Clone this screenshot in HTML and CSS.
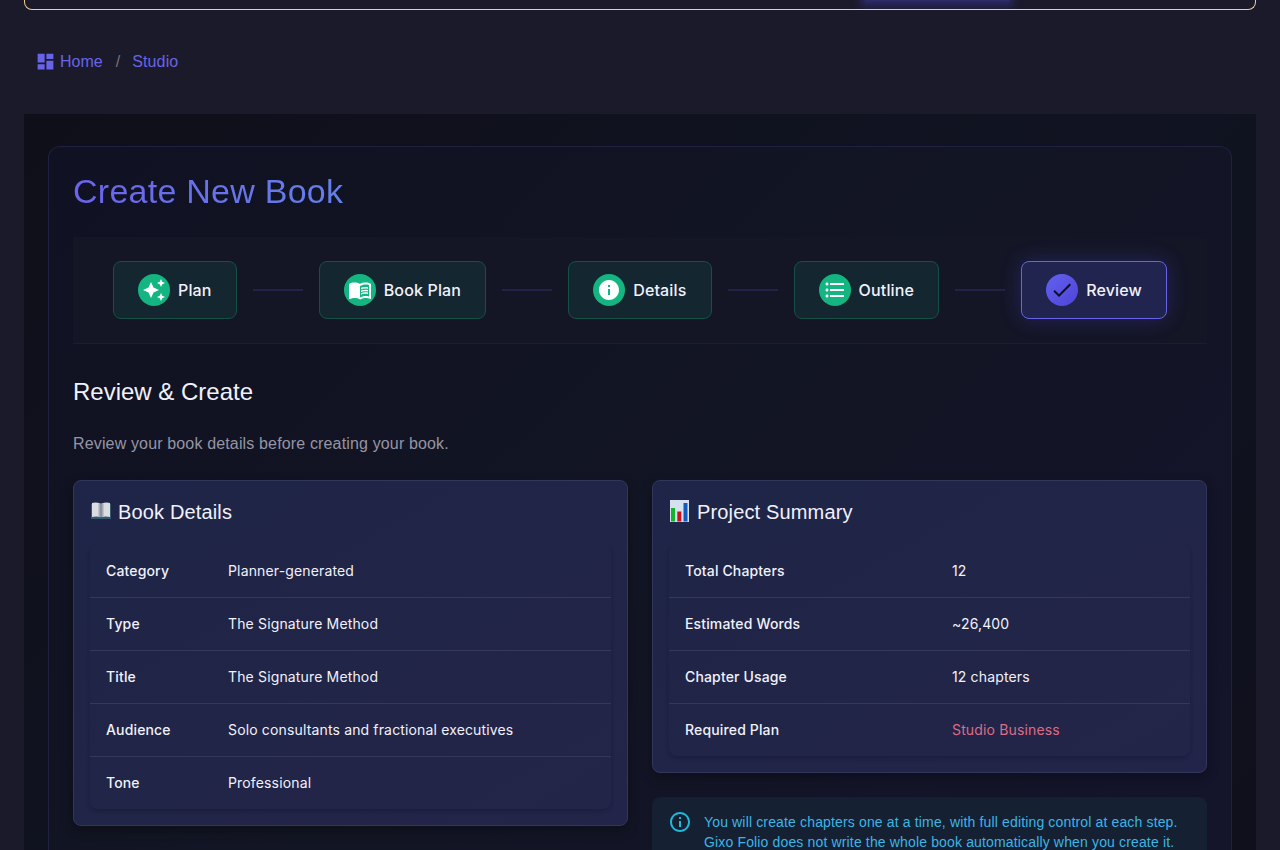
FILE: index.html
```
<!DOCTYPE html>
<html lang="en">

<head>
    <meta charset="UTF-8">
    <title>Create New Book</title>
    <link rel="stylesheet" href="styles.css">
</head>

<body>
    <div class="banner">
        <div class="banner-glow"></div>
    </div>

    <nav class="breadcrumb">
        <a class="home" href="#">
            <svg viewBox="0 0 24 24"><path d="M3 13h8V3H3v10zm0 8h8v-6H3v6zm10 0h8V11h-8v10zm0-18v6h8V3h-8z"/></svg>
            <span>Home</span>
        </a>
        <span class="separator">/</span>
        <a href="#">Studio</a>
    </nav>

    <main class="studio">
        <section class="panel">
            <h1><span>Create New Book</span></h1>

            <div class="stepper">
                <div class="step">
                    <span class="step-icon">
                        <svg viewBox="0 0 24 24"><path d="m19 9 1.25-2.75L23 5l-2.75-1.25L19 1l-1.25 2.75L15 5l2.75 1.25L19 9zm-7.5.5L9 4 6.5 9.5 1 12l5.5 2.5L9 20l2.5-5.5L17 12l-5.5-2.5zM19 15l-1.25 2.75L15 19l2.75 1.25L19 23l1.25-2.75L23 19l-2.75-1.25L19 15z"/></svg>
                    </span>
                    <span class="step-label">Plan</span>
                </div>
                <div class="connector"></div>
                <div class="step">
                    <span class="step-icon">
                        <svg viewBox="0 0 24 24"><path d="M21 5c-1.11-.35-2.33-.5-3.5-.5-1.95 0-4.05.4-5.5 1.5-1.45-1.1-3.55-1.5-5.5-1.5S2.45 4.9 1 6v14.65c0 .25.25.5.5.5.1 0 .15-.05.25-.05C3.1 20.45 5.05 20 6.5 20c1.95 0 4.05.4 5.5 1.5 1.35-.85 3.8-1.5 5.5-1.5 1.65 0 3.35.3 4.75 1.05.1.05.15.05.25.05.25 0 .5-.25.5-.5V6c-.6-.45-1.25-.75-2-1zm0 13.5c-1.1-.35-2.3-.5-3.5-.5-1.7 0-4.15.65-5.5 1.5V8c1.35-.85 3.8-1.5 5.5-1.5 1.2 0 2.4.15 3.5.5v11.5z"/><path d="M17.5 10.5c.88 0 1.73.09 2.5.26V9.24c-.79-.15-1.64-.24-2.5-.24-1.7 0-3.24.29-4.5.83v1.66c1.13-.64 2.7-.99 4.5-.99zM13 12.49v1.66c1.13-.64 2.7-.99 4.5-.99.88 0 1.73.09 2.5.26V11.9c-.79-.15-1.64-.24-2.5-.24-1.7 0-3.24.3-4.5.83zm4.5 1.84c-1.7 0-3.24.29-4.5.83v1.66c1.13-.64 2.7-.99 4.5-.99.88 0 1.73.09 2.5.26v-1.52c-.79-.16-1.64-.24-2.5-.24z"/></svg>
                    </span>
                    <span class="step-label">Book Plan</span>
                </div>
                <div class="connector"></div>
                <div class="step">
                    <span class="step-icon">
                        <svg viewBox="0 0 24 24"><path d="M12 2C6.48 2 2 6.48 2 12s4.48 10 10 10 10-4.48 10-10S17.52 2 12 2zm1 15h-2v-6h2v6zm0-8h-2V7h2v2z"/></svg>
                    </span>
                    <span class="step-label">Details</span>
                </div>
                <div class="connector"></div>
                <div class="step">
                    <span class="step-icon">
                        <svg viewBox="0 0 24 24"><path d="M4 10.5c-.83 0-1.5.67-1.5 1.5s.67 1.5 1.5 1.5 1.5-.67 1.5-1.5-.67-1.5-1.5-1.5zm0-6c-.83 0-1.5.67-1.5 1.5S3.17 7.5 4 7.5 5.5 6.83 5.5 6 4.83 4.5 4 4.5zm0 12c-.83 0-1.5.68-1.5 1.5s.68 1.5 1.5 1.5 1.5-.68 1.5-1.5-.67-1.5-1.5-1.5zM7 19h14v-2H7v2zm0-6h14v-2H7v2zm0-8v2h14V5H7z"/></svg>
                    </span>
                    <span class="step-label">Outline</span>
                </div>
                <div class="connector"></div>
                <div class="step active">
                    <span class="step-icon">
                        <svg viewBox="0 0 24 24"><path d="M9 16.17 4.83 12l-1.42 1.41L9 19 21 7l-1.41-1.41z"/></svg>
                    </span>
                    <span class="step-label">Review</span>
                </div>
            </div>

            <h2>Review &amp; Create</h2>
            <p class="subtitle">Review your book details before creating your book.</p>

            <div class="columns">
                <div class="card">
                    <h3>
                        <svg class="title-icon" viewBox="0 0 22 22">
                            <path fill="#35576f" d="M1 4h20v15H1z"/>
                            <path fill="#dcdde2" d="M2 3q4-1 8.5.5V17Q6 16 2 17zM20 3q-4-1-8.5.5V17q4.5-1 8.5 0z"/>
                            <path fill="#a7a9b2" d="M8.5 3.2l2 .5V17l-2-.5zM13.5 3.200l-2 .5V17l2-.5z"/>
                            <path fill="#777d8c" d="M10.600 3.500h.8v14h-.8z"/>
                        </svg>
                        <span>Book Details</span>
                    </h3>
                    <table class="details">
                        <tr><th>Category</th><td>Planner-generated</td></tr>
                        <tr><th>Type</th><td>The Signature Method</td></tr>
                        <tr><th>Title</th><td>The Signature Method</td></tr>
                        <tr><th>Audience</th><td>Solo consultants and fractional executives</td></tr>
                        <tr><th>Tone</th><td>Professional</td></tr>
                    </table>
                </div>

                <div class="column">
                    <div class="card">
                        <h3>
                            <svg class="title-icon" viewBox="0 0 22 22">
                                <path fill="#d5e1ee" d="M1 0h19v22H1z"/>
                                <path fill="#12b52a" d="M2 8h4v13.5H2z"/>
                                <path fill="#c4121f" d="M8.3 11.5h4v10h-4z"/>
                                <path fill="#1559bd" d="M14.5 3h4v18.5h-4z"/>
                            </svg>
                            <span>Project Summary</span>
                        </h3>
                        <table class="summary">
                            <tr><th>Total Chapters</th><td>12</td></tr>
                            <tr><th>Estimated Words</th><td>~26,400</td></tr>
                            <tr><th>Chapter Usage</th><td>12 chapters</td></tr>
                            <tr><th>Required Plan</th><td class="plan">Studio Business</td></tr>
                        </table>
                    </div>
                    <div class="alert">
                        <svg viewBox="0 0 24 24"><path d="M11 7h2v2h-2zm0 4h2v6h-2zm1-9C6.48 2 2 6.48 2 12s4.48 10 10 10 10-4.48 10-10S17.52 2 12 2zm0 18c-4.41 0-8-3.59-8-8s3.59-8 8-8 8 3.59 8 8-3.59 8-8 8z"/></svg>
                        <p>You will create chapters one at a time, with full editing control at each step.<br>Gixo Folio does not write the whole book automatically when you create it.</p>
                    </div>
                </div>
            </div>
        </section>
    </main>
</body>

</html>
```
FILE: styles.css
```
* {
    box-sizing: border-box;
}

body {
    margin: 0;
    padding: 0 24px;
    height: 850px;
    overflow: hidden;
    background-color: #1b1a2b;
    color: #f1f1fb;
    font-family: "Liberation Sans", Arial, sans-serif;
    font-size: 16px;
}

h1, h2, h3, p {
    margin: 0;
    font-weight: 400;
}

svg {
    fill: currentColor;
    flex-shrink: 0;
}

.banner {
    position: relative;
    height: 10px;
    border: 1px solid #f3cd91;
    border-top: 0;
    border-radius: 0 0 8px 8px;
    overflow: hidden;
}

.banner-glow {
    position: absolute;
    left: 840px;
    top: -20px;
    width: 144px;
    height: 22px;
    background-color: #2b2967;
    box-shadow: 0 0 8px 4px #2b2967;
}

.breadcrumb {
    display: flex;
    align-items: center;
    height: 104px;
    padding-left: 11px;
    color: #6864e8;
}

.breadcrumb a {
    color: inherit;
    text-decoration: none;
}

.breadcrumb .home {
    display: flex;
    align-items: center;
    gap: 4px;
}

.breadcrumb svg {
    width: 21px;
    height: 21px;
    margin-top: -1px;
}

.breadcrumb a:last-child {
    letter-spacing: 0.15px;
}

.separator {
    margin: 0 12px 0 13px;
    color: #737280;
}

.studio {
    height: 736px;
    padding: 32px 24px 0;
    background: linear-gradient(135deg, #0f0f19 0%, #101321 50%, #0f101c 100%);
}

.panel {
    height: 704px;
    padding: 24px 24px 0;
    border: 1px solid #202040;
    border-bottom: 0;
    border-radius: 12px 12px 0 0;
    background: linear-gradient(135deg, #101122 0%, #121523 50%, #14142b 100%);
}

h1 {
    margin-bottom: 26px;
    font-size: 34px;
    line-height: 40px;
    letter-spacing: 0.25px;
}

h1 span {
    background: linear-gradient(90deg, #6b64ec, #6480e9);
    -webkit-background-clip: text;
    background-clip: text;
    color: transparent;
}

.stepper {
    display: flex;
    align-items: center;
    justify-content: space-between;
    height: 107px;
    margin-bottom: 32px;
    padding: 24px 40px;
    border-bottom: 1px solid #1b1d34;
    background-color: #141626;
}

.step {
    display: flex;
    align-items: center;
    gap: 8px;
    height: 58px;
    padding: 0 24px;
    border: 1px solid #155047;
    border-radius: 8px;
    background-color: #142630;
    font-family: Inter, sans-serif;
    font-weight: 500;
    white-space: nowrap;
}

.step-icon {
    display: flex;
    align-items: center;
    justify-content: center;
    width: 32px;
    height: 32px;
    border-radius: 50%;
    background-color: #14b580;
    color: #fff;
}

.step-icon svg {
    width: 24px;
    height: 24px;
}

.step-label {
    letter-spacing: 0.15px;
}

.step.active {
    border-color: #6663e4;
    background-color: #21244e;
    box-shadow: 0 0 20px rgba(79, 70, 229, 0.3);
}

.active .step-icon {
    background: linear-gradient(135deg, #6461ef, #4d44d6);
    color: #0e1020;
}

.connector {
    width: 50px;
    height: 2px;
    background-color: #232349;
}

h2 {
    margin-bottom: 24px;
    font-size: 24px;
    line-height: 32px;
}

.subtitle {
    margin-bottom: 24px;
    line-height: 24px;
    letter-spacing: 0.15px;
    color: #9595a6;
}

.columns {
    display: grid;
    grid-template-columns: 1fr 1fr;
    align-items: start;
    gap: 24px;
}

.column {
    display: flex;
    flex-direction: column;
    gap: 24px;
}

.card {
    padding: 16px;
    border: 1px solid #32365a;
    border-radius: 8px;
    background: linear-gradient(150deg, #1f2548 0%, #212547 55%, #232449 100%);
    box-shadow: 0 4px 12px rgba(0, 0, 0, 0.3);
}

h3 {
    display: flex;
    align-items: center;
    gap: 6px;
    margin-bottom: 18px;
    font-size: 20px;
    line-height: 30px;
    letter-spacing: 0.15px;
}

.title-icon {
    width: 22px;
    height: 22px;
    margin-top: -2px;
}

table {
    width: 100%;
    border-collapse: separate;
    border-spacing: 0;
    border-radius: 8px;
    box-shadow: 0 2px 4px rgba(10, 12, 35, 0.3);
    clip-path: inset(0 -4px -8px -4px);
    font-family: Inter, sans-serif;
    font-size: 14px;
    line-height: 20px;
    letter-spacing: 0.15px;
}

th, td {
    height: 53px;
    padding: 0 16px;
    border-bottom: 1px solid #343959;
    font-weight: 400;
    text-align: left;
}

th {
    font-weight: 500;
}

tr:last-child th,
tr:last-child td {
    height: 52px;
    border-bottom: 0;
}

.details th {
    width: 122px;
}

.summary th {
    width: 267px;
}

.plan {
    color: #df6b86;
}

.alert {
    display: flex;
    gap: 12px;
    height: 53px;
    padding: 14px 15px 0;
    border: 1px solid #142032;
    border-bottom: 0;
    border-radius: 8px 8px 0 0;
    background-color: #152033;
    color: #3cb5e5;
    font-size: 14px;
    line-height: 20px;
}

.alert svg {
    width: 24px;
    height: 24px;
    margin-top: -2px;
    color: #1cb9d8;
}

.alert p {
    height: 38px;
    overflow: hidden;
    letter-spacing: 0.15px;
    white-space: nowrap;
}
```
